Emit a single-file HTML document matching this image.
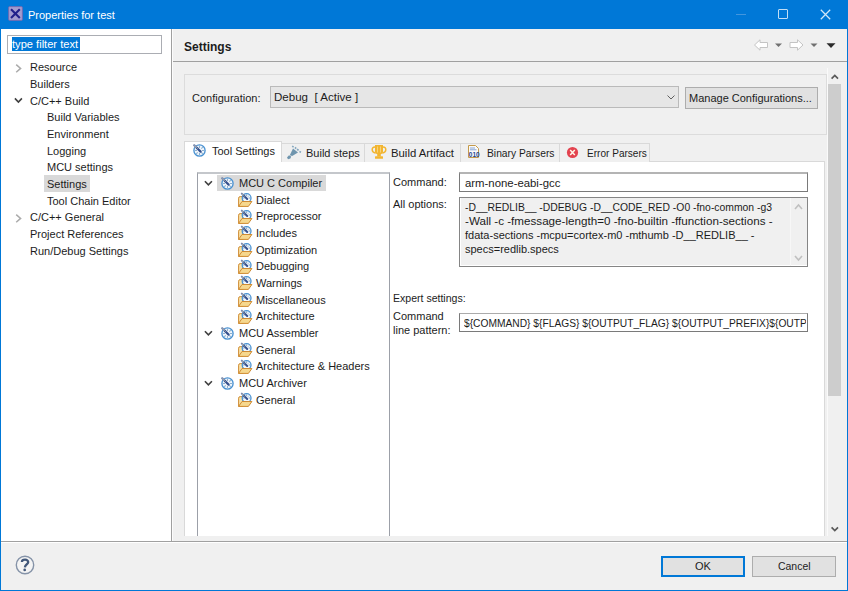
<!DOCTYPE html>
<html><head><meta charset="utf-8">
<style>
*{margin:0;padding:0;box-sizing:border-box}
html,body{width:848px;height:591px;overflow:hidden;background:#F0F0F0}
body{position:relative;font-family:"Liberation Sans",sans-serif;font-size:11px;color:#1C1C1C}
.a{position:absolute}
.t{position:absolute;white-space:nowrap;line-height:15px;height:15px}
</style></head><body>
<svg width="0" height="0" style="position:absolute">
<defs>
 <symbol id="gear" viewBox="0 0 13 13">
  <circle cx="6.5" cy="6.5" r="5.6" fill="#F2F7FC" stroke="#4A92D2" stroke-width="1.35"/>
  <path d="M6.5 1.8 V4 M6.5 9 V11.2 M1.8 6.5 H4 M9 6.5 H11.2 M3.2 9.8 L4.7 8.3 M9.8 3.2 L8.3 4.7 M9.8 9.8 L8.3 8.3" stroke="#8DB0CE" stroke-width="1.1"/>
  <path d="M1.2 1.2 L4.2 4.2" stroke="#7D8CAE" stroke-width="2.2" stroke-linecap="round"/>
  <path d="M4 4 L7.6 7.6" stroke="#35508E" stroke-width="2.2" stroke-linecap="round"/>
  <path d="M1.8 1.8 L5.2 5.2" stroke="#E2DDB8" stroke-width="0.8" stroke-dasharray="0.8 0.9"/>
 </symbol>
 <symbol id="fold" viewBox="0 0 18 18">
  <path d="M2.6 15.4 L2.6 7.2 Q2.6 5.6 4.2 5.6 L7 5.6 L7 15.4 Z" fill="#F8E2A6" stroke="#D08D35" stroke-width="1"/>
  <circle cx="10.6" cy="7" r="4.4" fill="#F2F7FC" stroke="#4A92D2" stroke-width="1.3"/>
  <path d="M10.6 3.4 V5 M7 7 H8.6 M12.6 7 H14.2 M13 4.6 L12 5.6" stroke="#7FA6C8" stroke-width="1"/>
  <path d="M5.8 2.6 L8.2 5" stroke="#7D8CAE" stroke-width="2" stroke-linecap="round"/><path d="M8 4.8 L11.2 8" stroke="#35508E" stroke-width="2" stroke-linecap="round"/>
  <path d="M6.4 3.2 L9.6 6.4" stroke="#D8D2A8" stroke-width="0.8" stroke-dasharray="0.8 0.8"/>
  <path d="M2.6 15.4 L12.4 15.4 L15.9 10.5 L6 10.5 Z" fill="#F6D88E" stroke="#CF8B32" stroke-width="1" stroke-linejoin="round"/>
 </symbol>
</defs></svg>
<!-- window frame -->
<div class="a" style="left:0;top:0;width:848px;height:29px;background:#0078D7"></div>
<div class="a" style="left:0;top:0;width:1px;height:591px;background:#0078D7"></div>
<div class="a" style="left:847px;top:0;width:1px;height:591px;background:#0078D7"></div>
<div class="a" style="left:0;top:590px;width:848px;height:1px;background:#0078D7"></div>

<!-- title bar -->
<svg class="a" style="left:8px;top:6px" width="16" height="16" viewBox="0 0 16 16">
 <rect x="0.6" y="0.6" width="13.8" height="13.8" rx="1" fill="#A39CCF" stroke="#6F68B0" stroke-width="0.9"/>
 <path d="M3 3.2 L11.8 12 M11.8 3.2 L3 12" stroke="#20208A" stroke-width="2.1"/>
</svg>
<div class="t" style="left:28px;top:8px;color:#fff">Properties for test</div>
<div class="a" style="left:736px;top:14px;width:10px;height:1px;background:#4396DE"></div>
<div class="a" style="left:778px;top:9px;width:10px;height:10px;border:1px solid #C2DEF5;border-radius:1px"></div>
<svg class="a" style="left:820px;top:9px" width="11" height="11" viewBox="0 0 11 11">
 <path d="M0.8 0.8 L10.2 10.2 M10.2 0.8 L0.8 10.2" stroke="#D2E7F8" stroke-width="1.25"/>
</svg>

<!-- left pane -->
<div class="a" style="left:1px;top:29px;width:170px;height:512px;background:#fff"></div>
<div class="a" style="left:171px;top:29px;width:1px;height:512px;background:#A0A0A0"></div>
<div class="a" style="left:172px;top:29px;width:1px;height:512px;background:#FCFCFC"></div>
<div class="a" style="left:7px;top:35px;width:155px;height:19px;border:1px solid #ABADB3;background:#fff"></div>
<div class="a" style="left:12px;top:37px;width:68px;height:14px;background:#0078D7"></div>
<div class="t" style="left:12px;top:37px;color:#fff;transform:scaleX(1.01);transform-origin:0 0">type filter text</div>

<!-- left tree -->
<svg class="a" style="left:14px;top:63px" width="9" height="11" viewBox="0 0 9 11"><path d="M2.2 1.6 L6.6 5.4 L2.2 9.2" fill="none" stroke="#ABABAB" stroke-width="1.5"/></svg>
<div class="t" style="left:30px;top:60px">Resource</div>
<div class="t" style="left:30px;top:77px">Builders</div>
<svg class="a" style="left:14px;top:96px" width="9" height="8" viewBox="0 0 9 8"><path d="M0.9 2.4 L4.4 6 L7.9 2.4" fill="none" stroke="#404040" stroke-width="1.6"/></svg>
<div class="t" style="left:30px;top:94px">C/C++ Build</div>
<div class="t" style="left:47px;top:110px">Build Variables</div>
<div class="t" style="left:47px;top:127px">Environment</div>
<div class="t" style="left:47px;top:144px">Logging</div>
<div class="t" style="left:47px;top:160px">MCU settings</div>
<div class="a" style="left:44px;top:175px;width:46px;height:17px;background:#D9D9D9"></div>
<div class="t" style="left:47px;top:177px">Settings</div>
<div class="t" style="left:47px;top:194px">Tool Chain Editor</div>
<svg class="a" style="left:14px;top:213px" width="9" height="11" viewBox="0 0 9 11"><path d="M2.2 1.6 L6.6 5.4 L2.2 9.2" fill="none" stroke="#ABABAB" stroke-width="1.5"/></svg>
<div class="t" style="left:30px;top:210px">C/C++ General</div>
<div class="t" style="left:30px;top:227px">Project References</div>
<div class="t" style="left:30px;top:244px">Run/Debug Settings</div>

<!-- right header -->
<div class="t" style="left:184px;top:40px;font-weight:bold;font-size:12px">Settings</div>
<div class="a" style="left:173px;top:61px;width:674px;height:1px;background:#A0A0A0"></div>


<!-- toolbar arrows -->
<svg class="a" style="left:753px;top:39px" width="84" height="13" viewBox="0 0 84 13">
 <path d="M1.5 6 L7 0.8 L7 3.5 L14.5 3.5 L14.5 8.5 L7 8.5 L7 11.2 Z" fill="#fff" stroke="#C4C4C4" stroke-width="1" stroke-linejoin="round"/>
 <path d="M22 4.5 L29 4.5 L25.5 8 Z" fill="#707070"/>
 <path d="M50 6 L44.5 0.8 L44.5 3.5 L37 3.5 L37 8.5 L44.5 8.5 L44.5 11.2 Z" fill="#fff" stroke="#C4C4C4" stroke-width="1" stroke-linejoin="round"/>
 <path d="M57.5 4.5 L64.5 4.5 L61 8 Z" fill="#707070"/>
 <path d="M73.5 4.3 L82.5 4.3 L78 9 Z" fill="#2A2A2A"/>
</svg>

<!-- scrolled area -->
<div class="a" style="left:184px;top:74px;width:643px;height:61px;border:1px solid #DCDCDC"></div>
<div class="t" style="left:192px;top:91px">Configuration:</div>
<div class="a" style="left:270px;top:86px;width:409px;height:22px;border:1px solid #BABABA;background:#E6E6E6"></div>
<div class="t" style="left:274px;top:90px;transform:scaleX(1.05);transform-origin:0 0">Debug&nbsp; [ Active ]</div>
<svg class="a" style="left:667px;top:95px" width="8" height="5" viewBox="0 0 8 5"><path d="M0.5 0.5 L4 4 L7.5 0.5" fill="none" stroke="#606060" stroke-width="1"/></svg>
<div class="a" style="left:685px;top:87px;width:133px;height:22px;border:1px solid #ADADAD;background:#E1E1E1"></div>
<div class="t" style="left:689px;top:91px">Manage Configurations...</div>

<!-- tabs -->
<div class="a" style="left:185px;top:162px;width:640px;height:374px;background:#fff"></div>
<div class="a" style="left:184px;top:161px;width:1px;height:375px;background:#D9D9D9"></div>
<div class="a" style="left:824px;top:161px;width:1px;height:375px;background:#D9D9D9"></div>
<div class="a" style="left:281px;top:161px;width:544px;height:1px;background:#D9D9D9"></div>
<div class="a" style="left:184px;top:141px;width:98px;height:21px;border:1px solid #D9D9D9;border-bottom:none;background:#fff"></div>
<div class="a" style="left:281px;top:143px;width:84px;height:19px;border:1px solid #D9D9D9;border-bottom:none;background:#F0F0F0"></div>
<div class="a" style="left:364px;top:143px;width:97px;height:19px;border:1px solid #D9D9D9;border-bottom:none;background:#F0F0F0"></div>
<div class="a" style="left:460px;top:143px;width:100px;height:19px;border:1px solid #D9D9D9;border-bottom:none;background:#F0F0F0"></div>
<div class="a" style="left:559px;top:143px;width:91px;height:19px;border:1px solid #D9D9D9;border-bottom:none;background:#F0F0F0"></div>
<div class="t" style="left:212px;top:144px">Tool Settings</div>
<div class="t" style="left:306px;top:146px">Build steps</div>
<div class="t" style="left:391px;top:146px;transform:scaleX(1.03);transform-origin:0 0">Build Artifact</div>
<div class="t" style="left:487px;top:146px;transform:scaleX(0.935);transform-origin:0 0">Binary Parsers</div>
<div class="t" style="left:587px;top:146px;transform:scaleX(0.915);transform-origin:0 0">Error Parsers</div>


<svg class="a" style="left:193px;top:144px" width="13" height="13"><use href="#gear"/></svg>
<svg class="a" style="left:286px;top:145px" width="16" height="15" viewBox="0 0 16 15">
 <path d="M7 3.6 L12 7.6 L6.2 11 L3.8 10.2 Z" fill="#6F95AE"/>
 <path d="M1 12.4 L3 10.2 L5.2 11.4 L4.4 13.6 L2 14.2 Z" fill="#6F95AE"/>
 <path d="M6.2 1.2 L7.6 2.2 M9 2.4 L10.2 3.6 M11 4.2 L12.6 5.2 M13.4 6.6 L15 7.2" stroke="#82A6BE" stroke-width="1.6"/>
</svg>
<svg class="a" style="left:371px;top:144px" width="16" height="15" viewBox="0 0 16 15">
 <path d="M4 1 L12 1 L12 8 Q12 10 10 10 L6 10 Q4 10 4 8 Z" fill="#F2B530"/>
 <path d="M4 3 Q1 3 1.2 6 Q1.5 8.5 4.5 9 M12 3 Q15 3 14.8 6 Q14.5 8.5 11.5 9" fill="none" stroke="#F2B530" stroke-width="1.5"/>
 <rect x="6.2" y="10" width="3.6" height="2.5" fill="#F2B530"/>
 <rect x="4" y="12.3" width="8" height="2.5" rx="0.5" fill="#F2B530"/>
 <path d="M6.5 2.5 V8.5 M9.5 2.5 V8.5" stroke="#F8D27A" stroke-width="1"/>
</svg>
<svg class="a" style="left:467px;top:144px" width="14" height="15" viewBox="0 0 14 15">
 <path d="M1.5 1.5 L8.5 1.5 L11.5 4.5 L11.5 13.5 L1.5 13.5 Z" fill="#FAFAFA" stroke="#C49A4A" stroke-width="1"/>
 <path d="M3 4 H8 M3 5.8 H9.5" stroke="#7A9CD0" stroke-width="0.9"/>
 <text x="1.8" y="13" font-family="Liberation Sans" font-size="6.5" font-weight="bold" fill="#24468F">010</text>
</svg>
<svg class="a" style="left:566px;top:146px" width="13" height="13" viewBox="0 0 13 13">
 <circle cx="6.5" cy="6.5" r="5.6" fill="#E3434F"/>
 <path d="M4.2 4 L8.8 9 M8.8 4 L4.2 9" stroke="#FFF6E8" stroke-width="1.5"/>
</svg>

<!-- tool tree -->
<div class="a" style="left:197px;top:172px;width:193px;height:364px;border:1px solid #9CA0A8;border-top:2px solid #C4C7CB;border-bottom:none;background:#fff"></div>

<div class="a" style="left:217px;top:175px;width:109px;height:16px;background:#D9D9D9"></div>
<svg class="a" style="left:204px;top:180px" width="9" height="7" viewBox="0 0 9 7"><path d="M0.9 1.2 L4.4 4.8 L7.9 1.2" fill="none" stroke="#404040" stroke-width="1.6"/></svg>
<svg class="a" style="left:221px;top:177px" width="13" height="13"><use href="#gear"/></svg>
<div class="t" style="left:239px;top:176px">MCU C Compiler</div>
<svg class="a" style="left:236px;top:191px" width="18" height="18"><use href="#fold"/></svg>
<div class="t" style="left:256px;top:193px">Dialect</div>
<svg class="a" style="left:236px;top:208px" width="18" height="18"><use href="#fold"/></svg>
<div class="t" style="left:256px;top:209px">Preprocessor</div>
<svg class="a" style="left:236px;top:224px" width="18" height="18"><use href="#fold"/></svg>
<div class="t" style="left:256px;top:226px">Includes</div>
<svg class="a" style="left:236px;top:241px" width="18" height="18"><use href="#fold"/></svg>
<div class="t" style="left:256px;top:243px">Optimization</div>
<svg class="a" style="left:236px;top:258px" width="18" height="18"><use href="#fold"/></svg>
<div class="t" style="left:256px;top:259px">Debugging</div>
<svg class="a" style="left:236px;top:274px" width="18" height="18"><use href="#fold"/></svg>
<div class="t" style="left:256px;top:276px">Warnings</div>
<svg class="a" style="left:236px;top:291px" width="18" height="18"><use href="#fold"/></svg>
<div class="t" style="left:256px;top:293px">Miscellaneous</div>
<svg class="a" style="left:236px;top:308px" width="18" height="18"><use href="#fold"/></svg>
<div class="t" style="left:256px;top:309px">Architecture</div>
<svg class="a" style="left:204px;top:330px" width="9" height="7" viewBox="0 0 9 7"><path d="M0.9 1.2 L4.4 4.8 L7.9 1.2" fill="none" stroke="#404040" stroke-width="1.6"/></svg>
<svg class="a" style="left:221px;top:327px" width="13" height="13"><use href="#gear"/></svg>
<div class="t" style="left:239px;top:326px">MCU Assembler</div>
<svg class="a" style="left:236px;top:341px" width="18" height="18"><use href="#fold"/></svg>
<div class="t" style="left:256px;top:343px">General</div>
<svg class="a" style="left:236px;top:358px" width="18" height="18"><use href="#fold"/></svg>
<div class="t" style="left:256px;top:359px">Architecture &amp; Headers</div>
<svg class="a" style="left:204px;top:380px" width="9" height="7" viewBox="0 0 9 7"><path d="M0.9 1.2 L4.4 4.8 L7.9 1.2" fill="none" stroke="#404040" stroke-width="1.6"/></svg>
<svg class="a" style="left:221px;top:377px" width="13" height="13"><use href="#gear"/></svg>
<div class="t" style="left:239px;top:376px">MCU Archiver</div>
<svg class="a" style="left:236px;top:391px" width="18" height="18"><use href="#fold"/></svg>
<div class="t" style="left:256px;top:393px">General</div>

<!-- fields -->
<div class="t" style="left:393px;top:175px">Command:</div>
<div class="a" style="left:459px;top:172px;width:349px;height:20px;border:1px solid #7A7A7A;border-top:2px solid #B4B4B4;background:#fff"></div>
<div class="t" style="left:465px;top:176px;transform:scaleX(1.033);transform-origin:0 0">arm-none-eabi-gcc</div>
<div class="t" style="left:393px;top:197px">All options:</div>
<div class="a" style="left:459px;top:197px;width:349px;height:70px;border:1px solid #858585;background:#F0F0F0;overflow:hidden;box-shadow:inset 1px -1px 0 #fff">
 <div class="a" style="left:330px;top:0;width:1px;height:68px;background:#F7F7F7"></div>
</div>
<div class="t" style="left:465px;top:200px;transform:scaleX(0.942);transform-origin:0 0">-D__REDLIB__ -DDEBUG -D__CODE_RED -O0 -fno-common -g3</div>
<div class="t" style="left:465px;top:214px;transform:scaleX(1.058);transform-origin:0 0">-Wall -c -fmessage-length=0 -fno-builtin -ffunction-sections -</div>
<div class="t" style="left:465px;top:228px">fdata-sections -mcpu=cortex-m0 -mthumb -D__REDLIB__ -</div>
<div class="t" style="left:465px;top:242px">specs=redlib.specs</div>
<svg class="a" style="left:794px;top:203px" width="9" height="60" viewBox="0 0 9 60">
 <path d="M1 6 L4.5 2 L8 6" fill="none" stroke="#C0C0C0" stroke-width="1.6"/>
 <path d="M1 53 L4.5 57 L8 53" fill="none" stroke="#C0C0C0" stroke-width="1.6"/>
</svg>
<div class="t" style="left:393px;top:291px;transform:scaleX(0.958);transform-origin:0 0">Expert settings:</div>
<div class="t" style="left:393px;top:309px">Command</div>
<div class="t" style="left:393px;top:323px">line pattern:</div>
<div class="a" style="left:459px;top:313px;width:349px;height:19px;border:1px solid #7A7A7A;border-top-color:#ABABAB;background:#fff;overflow:hidden">
 <div class="a" style="left:0;top:0;width:346px;height:17px;overflow:hidden"><div class="t" style="left:4px;top:2px;transform:scaleX(0.93);transform-origin:0 0">${COMMAND} ${FLAGS} ${OUTPUT_FLAG} ${OUTPUT_PREFIX}${OUTPUT} ${INPUTS}</div></div>
</div>

<!-- scrollbar -->
<div class="a" style="left:827px;top:68px;width:20px;height:468px;background:#F0F0F0"></div>
<div class="a" style="left:827px;top:68px;width:1px;height:468px;background:#FAFAFA"></div>
<div class="a" style="left:828px;top:84px;width:13px;height:312px;background:#CDCDCD"></div>
<svg class="a" style="left:830px;top:72px" width="10" height="9" viewBox="0 0 10 9"><path d="M1.6 6.6 L4.8 3.4 L8 6.6" fill="none" stroke="#595959" stroke-width="1.7"/></svg>
<svg class="a" style="left:830px;top:525px" width="10" height="9" viewBox="0 0 10 9"><path d="M1.6 2.4 L4.8 5.6 L8 2.4" fill="none" stroke="#595959" stroke-width="1.7"/></svg>

<!-- bottom -->
<div class="a" style="left:1px;top:541px;width:846px;height:1px;background:#A0A0A0"></div>
<div class="a" style="left:1px;top:542px;width:846px;height:1px;background:#fff"></div>
<svg class="a" style="left:15px;top:555px" width="20" height="20" viewBox="0 0 20 20">
 <circle cx="10" cy="10" r="8.7" fill="#F4F4F4" stroke="#8593A8" stroke-width="1.4"/>
 <path d="M6.9 7 C7 3.9 13.4 3.9 13.2 7.2 C13 9.4 10.2 9.6 9.9 12.3" fill="none" stroke="#42587A" stroke-width="2.3"/>
 <circle cx="9.7" cy="14.9" r="1.35" fill="#42587A"/>
</svg>
<div class="a" style="left:661px;top:556px;width:84px;height:21px;border:2px solid #0078D7;background:#E1E1E1"></div>
<div class="t" style="left:695px;top:559px">OK</div>
<div class="a" style="left:752px;top:556px;width:84px;height:21px;border:1px solid #ADADAD;background:#E1E1E1"></div>
<div class="t" style="left:778px;top:559px;transform:scaleX(0.95);transform-origin:0 0">Cancel</div>

</body></html>
